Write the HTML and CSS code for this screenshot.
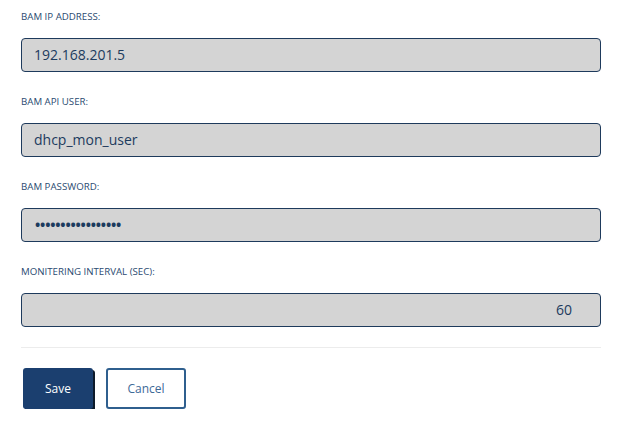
FILE: index.html
```html
<!DOCTYPE html>
<html>
<head>
<meta charset="utf-8">
<link rel="stylesheet" href="styles.css">
</head>
<body>
<form class="form">
  <div class="field">
    <label class="label">BAM IP ADDRESS:</label>
    <div class="input">192.168.201.5</div>
  </div>
  <div class="field">
    <label class="label">BAM API USER:</label>
    <div class="input">dhcp_mon_user</div>
  </div>
  <div class="field">
    <label class="label">BAM PASSWORD:</label>
    <div class="input input-password">&bull;&bull;&bull;&bull;&bull;&bull;&bull;&bull;&bull;&bull;&bull;&bull;&bull;&bull;&bull;&bull;&bull;</div>
  </div>
  <div class="field">
    <label class="label">MONITERING INTERVAL (SEC):</label>
    <div class="input input-number">60</div>
  </div>
  <hr class="divider">
  <div class="actions">
    <button type="button" class="btn btn-primary">Save</button>
    <button type="button" class="btn btn-secondary">Cancel</button>
  </div>
</form>
</body>
</html>
```
FILE: styles.css
```css
html, body {
  margin: 0;
  padding: 0;
  background: #ffffff;
}
body {
  font-family: "Open Sans", "Noto Sans", sans-serif;
  color: #1c3b5e;
}
.form {
  width: 580px;
  padding: 10px 0 0 21px;
  display: flex;
  flex-direction: column;
}
.field {
  display: flex;
  flex-direction: column;
  height: 85px;
}
.label {
  display: block;
  font-size: 9.7px;
  line-height: 13px;
  color: #2a4a70;
  margin-bottom: 15px;
}
.input {
  box-sizing: border-box;
  height: 34px;
  border: 1px solid #1e3a5c;
  border-radius: 4px;
  background: #d4d4d4;
  font-size: 14px;
  line-height: 32px;
  padding: 0 12px;
  color: #1c3b5e;
}
.input-password {
  letter-spacing: -0.2px;
  font-size: 14px;
  font-weight: 700;
  padding-left: 13px;
}
.input-number {
  text-align: right;
  padding-right: 28px;
}
.divider {
  border: 0;
  border-top: 1px solid #ececec;
  margin: -3px 0 20px 0;
  height: 0;
}
.actions {
  display: flex;
  gap: 13px;
  padding-left: 2px;
}
.btn {
  box-sizing: border-box;
  height: 41px;
  font-family: "Open Sans", "Noto Sans", sans-serif;
  font-size: 12px;
  border-radius: 3px;
  cursor: pointer;
}
.btn-primary {
  width: 70px;
  background: #1b3f6f;
  color: #ffffff;
  border: 0;
  box-shadow: 2px 2px 0 #0d1a2a;
}
.btn-secondary {
  width: 80px;
  background: #ffffff;
  color: #3d6a97;
  border: 2px solid #2f5f8e;
}
```
